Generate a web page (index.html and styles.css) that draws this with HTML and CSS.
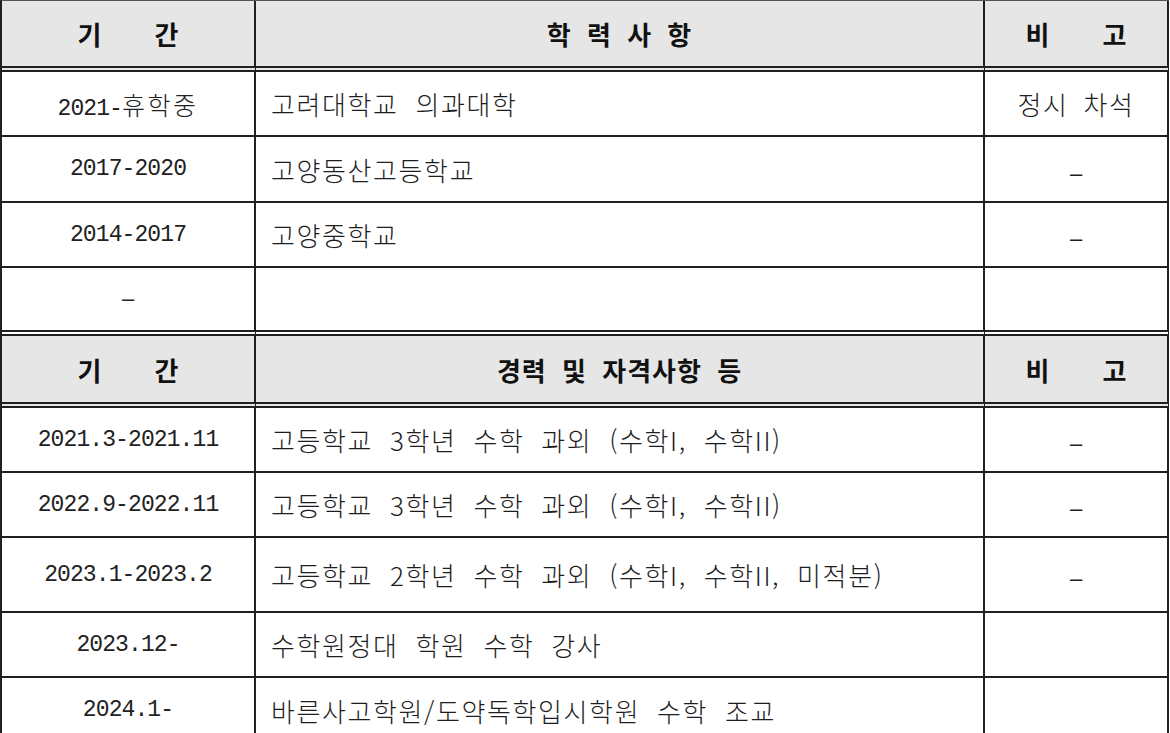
FILE: index.html
```html
<!DOCTYPE html>
<html lang="ko">
<head>
<meta charset="utf-8">
<title>학력 및 경력사항</title>
<link rel="stylesheet" href="styles.css">
</head>
<body>
<table class="sheet">
  <tbody>
    <tr class="head h1">
      <td class="c-date"><span class="spread"><span>기</span><span>간</span></span></td>
      <td class="c-main head-main">학 력 사 항</td>
      <td class="c-note"><span class="spread"><span>비</span><span>고</span></span></td>
    </tr>
    <tr class="r65">
      <td class="c-date">2021-<span class="ko">휴학중</span></td>
      <td class="c-main">고려대학교 의과대학</td>
      <td class="c-note">정시 차석</td>
    </tr>
    <tr class="r66">
      <td class="c-date">2017-2020</td>
      <td class="c-main">고양동산고등학교</td>
      <td class="c-note"><span class="dash">–</span></td>
    </tr>
    <tr class="r65">
      <td class="c-date">2014-2017</td>
      <td class="c-main">고양중학교</td>
      <td class="c-note"><span class="dash">–</span></td>
    </tr>
    <tr class="r68 dbl">
      <td class="c-date"><span class="dash">–</span></td>
      <td class="c-main"></td>
      <td class="c-note"></td>
    </tr>
    <tr class="head h2">
      <td class="c-date"><span class="spread"><span>기</span><span>간</span></span></td>
      <td class="c-main head-main">경력 및 자격사항 등</td>
      <td class="c-note"><span class="spread"><span>비</span><span>고</span></span></td>
    </tr>
    <tr class="r65">
      <td class="c-date">2021.3-2021.11</td>
      <td class="c-main">고등학교 3학년 수학 과외 (수학I, 수학II)</td>
      <td class="c-note"><span class="dash">–</span></td>
    </tr>
    <tr class="r65">
      <td class="c-date">2022.9-2022.11</td>
      <td class="c-main">고등학교 3학년 수학 과외 (수학I, 수학II)</td>
      <td class="c-note"><span class="dash">–</span></td>
    </tr>
    <tr class="r75">
      <td class="c-date">2023.1-2023.2</td>
      <td class="c-main">고등학교 2학년 수학 과외 (수학I, 수학II, 미적분)</td>
      <td class="c-note"><span class="dash">–</span></td>
    </tr>
    <tr class="r65">
      <td class="c-date">2023.12-</td>
      <td class="c-main">수학원정대 학원 수학 강사</td>
      <td class="c-note"></td>
    </tr>
    <tr class="r66">
      <td class="c-date">2024.1-</td>
      <td class="c-main">바른사고학원/도약독학입시학원 수학 조교</td>
      <td class="c-note"></td>
    </tr>
  </tbody>
</table>
</body>
</html>
```
FILE: styles.css
```css
html, body {
  margin: 0;
  padding: 0;
  overflow: hidden;
  background: #ffffff;
}

.sheet {
  border-collapse: separate;
  border-spacing: 0;
  table-layout: fixed;
  width: 1169px;
  border-left: 2px solid #202020;
  border-top: 1px solid #555555;
  font-family: "Noto Sans CJK KR", sans-serif;
  color: #1e1e1e;
}

.sheet td {
  box-sizing: border-box;
  padding: 0;
  border-right: 2px solid #202020;
  border-bottom: 2px solid #202020;
  vertical-align: middle;
  white-space: nowrap;
}

.sheet td.c-date {
  width: 254px;
  text-align: center;
  font-family: "Liberation Mono", "Noto Sans CJK KR", monospace;
  font-size: 23px;
  letter-spacing: -0.9px;
  color: #222222;
}

.sheet td.c-main {
  width: 729px;
  padding-left: 15px;
  font-size: 26px;
  font-weight: 300;
  letter-spacing: 1.6px;
  word-spacing: 8px;
}

.sheet td.c-note {
  width: 184px;
  text-align: center;
  font-size: 26px;
  font-weight: 300;
  letter-spacing: 1.6px;
  word-spacing: 6px;
}

.ko {
  font-family: "Noto Sans CJK KR", sans-serif;
  font-size: 25px;
  font-weight: 300;
  letter-spacing: 2.5px;
}

.dash {
  font-family: "Liberation Sans", sans-serif;
  font-size: 22px;
  letter-spacing: 0;
}

.head td {
  background: #e6e6e6;
  border-bottom: 6px double #202020;
  font-family: "Noto Sans CJK KR", sans-serif;
  font-weight: 700;
  font-size: 26px;
  color: #111111;
  letter-spacing: 1px;
  word-spacing: 7px;
}

.head td.c-main.head-main {
  padding-left: 0;
  text-align: center;
  font-weight: 700;
  font-size: 26px;
  letter-spacing: 1px;
  word-spacing: 7px;
}

.head td.c-date,
.head td.c-note {
  font-family: "Noto Sans CJK KR", sans-serif;
  font-weight: 700;
  font-size: 26px;
  color: #111111;
}

.spread {
  display: inline-flex;
  gap: 53px;
  letter-spacing: 0;
}

.dbl td {
  border-bottom: 6px double #202020;
}

.h1 { height: 71px; }
.h2 { height: 72px; }
.r65 { height: 65px; }
.r66 { height: 66px; }
.r68 { height: 68px; }
.r75 { height: 75px; }
```
